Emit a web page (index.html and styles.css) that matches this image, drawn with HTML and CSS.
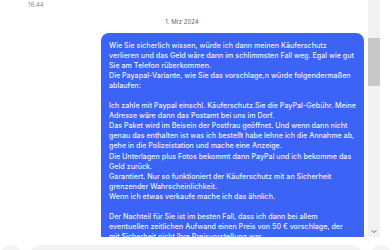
FILE: index.html
```html
<!DOCTYPE html>
<html lang="de">
<head>
    <meta charset="UTF-8">
    <meta name="viewport" content="width=device-width, initial-scale=1.0">
    <title>Nachrichten</title>
    <link rel="stylesheet" href="styles.css">
</head>
<body>
    <div class="chat">
        <div class="messages">
            <div class="time">16:44</div>
            <div class="date">1. Mrz 2024</div>
            <div class="bubble-row">
                <div class="bubble">
                    Wie Sie sicherlich wissen, würde ich dann meinen Käuferschutz<br>
                    verlieren und das Geld wäre dann im schlimmsten Fall weg. Egal wie gut<br>
                    Sie am Telefon rüberkommen.<br>
                    Die Payapal-Variante, wie Sie das vorschlage,n würde folgendermaßen<br>
                    ablaufen:<br>
                    <br>
                    Ich zahle mit Paypal einschl. Käuferschutz.Sie die PayPal-Gebühr. Meine<br>
                    Adresse wäre dann das Postamt bei uns im Dorf.<br>
                    Das Paket wird im Beisein der Postfrau geöffnet. Und wenn dann nicht<br>
                    genau das enthalten ist was ich bestellt habe lehne ich die Annahme ab,<br>
                    gehe in die Polizeistation und mache eine Anzeige.<br>
                    Die Unterlagen plus Fotos bekommt dann PayPal und ich bekomme das<br>
                    Geld zurück.<br>
                    Garantiert. Nur so funktioniert der Käuferschutz mit an Sicherheit<br>
                    grenzender Wahrscheinlichkeit.<br>
                    Wenn ich etwas verkaufe mache ich das ähnlich.<br>
                    <br>
                    Der Nachteil für Sie ist im besten Fall, dass ich dann bei allem<br>
                    eventuellen zeitlichen Aufwand einen Preis von 50 € vorschlage, der<br>
                    mit Sicherheit nicht Ihre Preisvorstellung war.
                </div>
            </div>
        </div>
        <div class="scrollbar">
            <div class="thumb"></div>
            <div class="arrow">&#8964;</div>
        </div>
    </div>

    <div class="composer">
        <div class="circle"></div>
        <div class="input"></div>
        <div class="circle"></div>
    </div>
</body>
</html>
```

FILE: styles.css
```css
body {
    margin: 0;
    width: 392px;
    height: 250px;
    overflow: hidden;
    background: #fff;
    font-family: Inter, "Liberation Sans", sans-serif;
}
.chat {
    display: flex;
    height: 237px;
}
.messages {
    flex: 1;
    overflow: hidden;
    padding-right: 4px;
}
.time {
    font-size: 6px;
    color: #8a8a8a;
    padding: 1px 0 0 28px;
    height: 9px;
}
.date {
    font-size: 6px;
    color: #666;
    text-align: center;
    padding-top: 8px;
    height: 15px;
}
.bubble-row {
    display: flex;
    justify-content: flex-end;
}
.bubble {
    width: 255px;
    background: #3b63f5;
    color: rgba(255,255,255,0.93);
    border-radius: 8px 8px 0 0;
    padding: 8px 0 0 8px;
    font-size: 7.15px;
    font-weight: 500;
    line-height: 10.05px;
    white-space: nowrap;
}
.scrollbar {
    width: 12px;
    margin-right: 12px;
    background: #f1f1f1;
    display: flex;
    flex-direction: column;
}
.thumb {
    margin-top: 38px;
    height: 48px;
    background: #c8c8c8;
}
.arrow {
    margin-top: auto;
    text-align: center;
    font-size: 9px;
    line-height: 8px;
    color: #777;
    padding-bottom: 3px;
}
.composer {
    display: flex;
    align-items: flex-start;
    gap: 8px;
    padding-top: 8px;
}
.circle {
    width: 22px;
    height: 22px;
    border-radius: 50%;
    background: #f4f4f4;
    flex-shrink: 0;
}
.input {
    flex: 1;
    height: 30px;
    background: #f2f2f2;
    border-radius: 10px;
}
```
